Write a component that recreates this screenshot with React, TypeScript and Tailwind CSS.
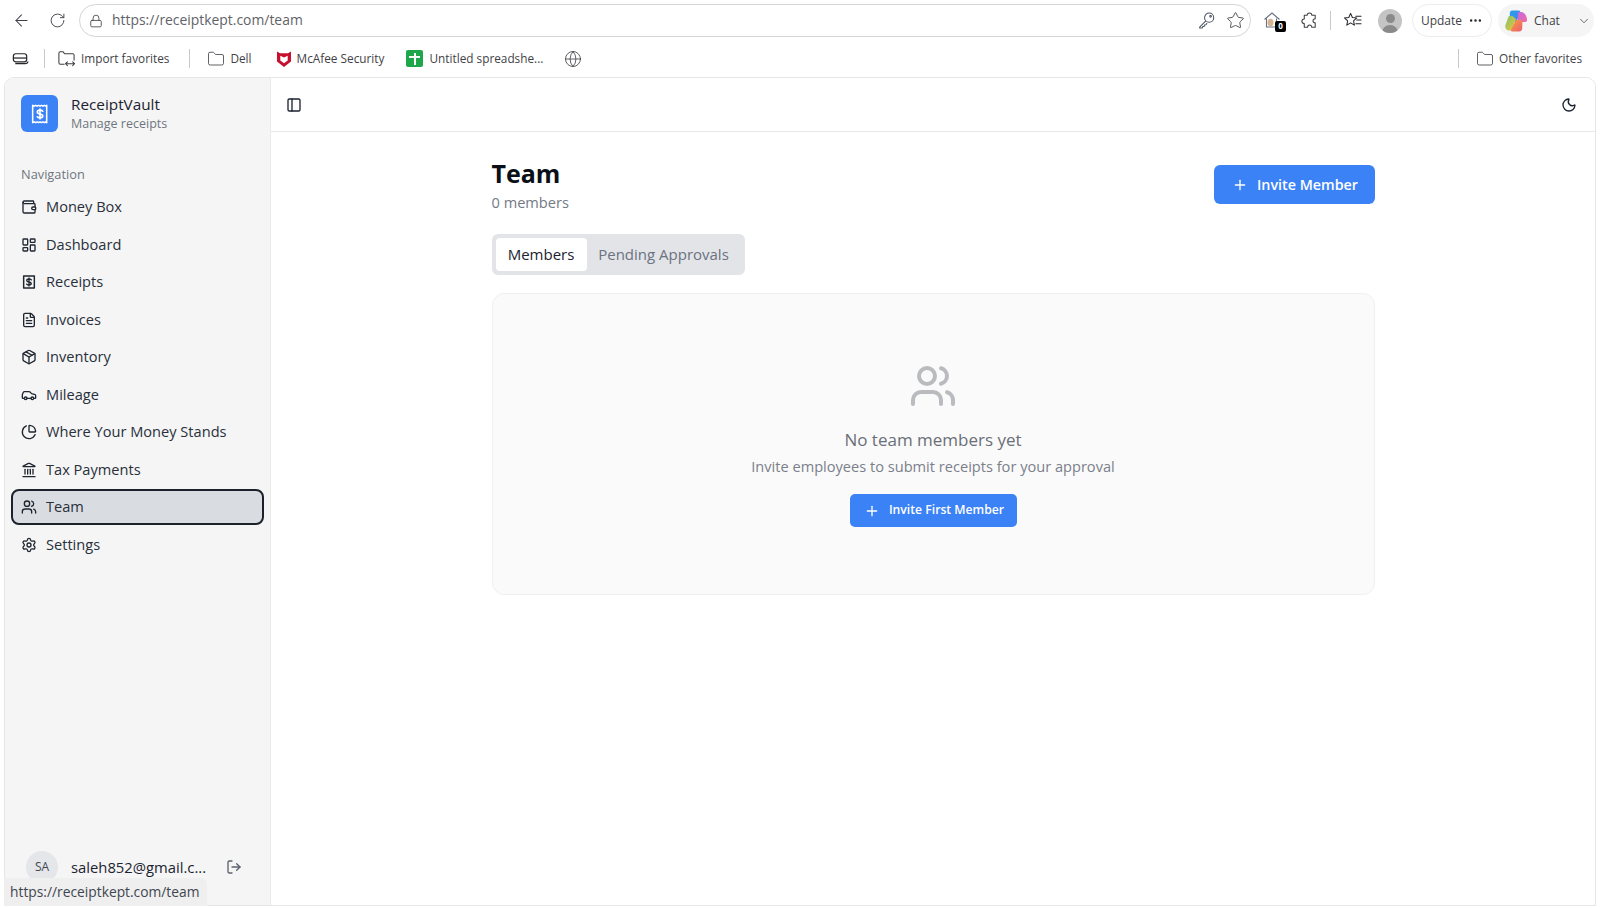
import {
  ArrowLeft,
  Car,
  ChevronDown,
  FileText,
  Folder,
  Globe,
  Landmark,
  LayoutDashboard,
  Lock,
  LogOut,
  Moon,
  MoreHorizontal,
  Package,
  PanelLeft,
  PieChart,
  Plus,
  RotateCw,
  Settings,
  Star,
  Users,
  Wallet,
  type LucideIcon,
} from 'lucide-react';

const font = { fontFamily: '"Open Sans", "Noto Sans", sans-serif' };

function ReceiptDollar({ className }: { className?: string }) {
  return (
    <svg viewBox="0 0 24 24" fill="none" stroke="currentColor" strokeWidth="2.200" strokeLinejoin="round" className={className}>
      <path d="M4 3h16v18H4z" />
      <path d="M12 6v12M15.500 8.800c-.7-.9-1.900-1.300-3.500-1.300-1.800 0-3.400.7-3.400 2.200s1.600 2 3.400 2.300 3.400.9 3.400 2.400-1.600 2.200-3.400 2.200c-1.600 0-2.800-.5-3.500-1.400" strokeWidth="2" strokeLinecap="round" />
    </svg>
  );
}

function LogoReceipt() {
  return (
    <svg viewBox="0 0 24 24" fill="none" className="h-[22px] w-[22px]">
      <path
        d="M4 2.500l1.600 1 1.600-1 1.600 1 1.600-1 1.600 1 1.600-1 1.600 1 1.600-1 1.600 1 .9-1v19l-.9-1-1.600 1-1.600-1-1.600 1-1.600-1-1.600 1-1.600-1-1.600 1-1.600-1L4 21.500z"
        stroke="white"
        strokeWidth="1.700"
        strokeLinejoin="round"
      />
      <path
        d="M12 6.500v11M15 9c-.6-.9-1.600-1.200-3-1.200-1.600 0-3 .6-3 2s1.400 1.900 3 2.200 3 .8 3 2.200-1.400 2-3 2c-1.400 0-2.400-.4-3-1.200"
        stroke="white"
        strokeWidth="1.800"
        strokeLinecap="round"
      />
    </svg>
  );
}

function KeyIcon() {
  return (
    <svg viewBox="0 0 20 20" fill="none" stroke="#4b5563" strokeWidth="1.100" className="h-[19px] w-[19px]">
      <circle cx="12.800" cy="7" r="4.800" />
      <circle cx="14.300" cy="5.600" r="0.900" />
      <path d="M9.300 10.400 2.800 17v.9h2.700l.5-1.500h1.500l.4-1.600 1.500-.4 1.200-1.800" strokeLinejoin="round" />
    </svg>
  );
}

function PuzzleIcon() {
  return (
    <svg viewBox="0 0 20 20" fill="none" stroke="#3f3f46" strokeWidth="1.100" strokeLinejoin="round" className="h-[19px] w-[19px]">
      <path d="M7.500 4.500C7.500 2.800 8.700 2 10 2s2.500.8 2.500 2.500H16v3.600c-1.500 0-2.300 1-2.300 2.200s.8 2.200 2.300 2.200V17h-3.600c0-1.500-1-2.300-2.200-2.300S8 15.500 8 17H4.500v-3.700C2.900 13.300 2 12.100 2 10.900s.9-2.400 2.500-2.400V4.500z" />
    </svg>
  );
}

function FavListIcon() {
  return (
    <svg viewBox="0 0 20 20" fill="none" stroke="#27272a" strokeWidth="1.100" strokeLinejoin="round" className="h-[19px] w-[19px]">
      <path d="M8 2.500l1.900 4.300 4.600.5-3.400 3 .9 4.600L8 12.500l-4 2.400.9-4.600-3.400-3 4.600-.5z" />
      <path d="M13.500 5.500H19M14.500 9.500H19M13.500 13.500H19" strokeLinecap="round" />
    </svg>
  );
}

function HomeBadge() {
  return (
    <div className="relative h-[22px] w-[22px]">
      <svg viewBox="0 0 22 22" fill="none" className="h-[22px] w-[22px]">
        <path d="M2.500 9.500 10 3l7.500 6.500M4.500 8.500V17h10V8.500" stroke="#6b7280" strokeWidth="1.100" />
        <ellipse cx="8.500" cy="12.500" rx="3" ry="3.800" fill="#d6b48f" />
      </svg>
      <span className="absolute bottom-0 right-[-2px] flex h-[11px] w-[11px] items-center justify-center rounded-[2px] bg-black text-[8px] font-bold leading-none text-white">
        0
      </span>
    </div>
  );
}

function Copilot() {
  return (
    <svg viewBox="0 0 24 24" className="h-[24px] w-[24px]">
      <defs>
        <linearGradient id="cp1" x1="0" y1="0" x2="1" y2="1">
          <stop offset="0" stopColor="#2aa3e8" />
          <stop offset="1" stopColor="#3f7ff0" />
        </linearGradient>
        <linearGradient id="cp2" x1="0" y1="0" x2="1" y2="1">
          <stop offset="0" stopColor="#c56be0" />
          <stop offset="1" stopColor="#f06aa8" />
        </linearGradient>
        <linearGradient id="cp3" x1="0" y1="0" x2="1" y2="1">
          <stop offset="0" stopColor="#7cc36b" />
          <stop offset="1" stopColor="#f2c43c" />
        </linearGradient>
        <linearGradient id="cp4" x1="0" y1="0" x2="1" y2="1">
          <stop offset="0" stopColor="#f7a03a" />
          <stop offset="1" stopColor="#ec5b73" />
        </linearGradient>
      </defs>
      <path d="M8 1.500h6.500c1.400 0 2 .9 1.500 2.200L12.500 13H6l-.2-9c0-1.500 1-2.500 2.200-2.500z" fill="url(#cp1)" />
      <path d="M14 3h3c3 0 5.500 3 6 7.500.2 1.500-.8 2.500-2 2.500h-7.500z" fill="url(#cp2)" />
      <path d="M6 7c-1 0-1.500.5-2 2L1.500 16c-.8 2.800 1 5.500 3.500 5.500h3L12 10 8.500 7z" fill="url(#cp3)" />
      <path d="M12 11h6.500l-.3 8.500c0 1.500-1.200 3-3 3H8c-1 0-1.300-.8-1-1.500z" fill="url(#cp4)" />
    </svg>
  );
}

function McAfee() {
  return (
    <svg viewBox="0 0 16 18" className="h-[18px] w-[16px]">
      <path d="M1 1.500 4 3.300h8l3-1.800v10L8 17 1 11.500z" fill="#c8102e" />
      <path d="M4.300 5.800 8 7.500l3.700-1.700v4.700L8 13.200l-3.700-2.700z" fill="white" />
    </svg>
  );
}

function SheetIcon() {
  return (
    <div className="relative mr-[1px] h-[17px] w-[17px] rounded-[2px] bg-[#1ea64a]">
      <span className="absolute left-[3px] right-[3px] top-[6px] h-[2px] bg-white" />
      <span className="absolute bottom-[2px] left-[7.500px] top-[3px] w-[2px] bg-white" />
    </div>
  );
}

function ImportFav() {
  return (
    <svg viewBox="0 0 20 20" fill="none" stroke="#3f3f46" strokeWidth="1.100" strokeLinejoin="round" className="h-[19px] w-[19px]">
      <path d="M8 16H3.500A1.500 1.500 0 0 1 2 14.500v-10A1.500 1.500 0 0 1 3.500 3h3l1.500 2h8.500A1.500 1.500 0 0 1 18 6.500V12" />
      <path d="M9.500 15.500h8.500M11 13.500l-2 2 2 2M16.500 13.500l2 2-2 2" strokeLinecap="round" />
    </svg>
  );
}

function TabsIcon() {
  return (
    <svg viewBox="0 0 20 20" fill="none" stroke="#27272a" strokeWidth="1.300" className="h-[19px] w-[19px]">
      <rect x="2.500" y="5" width="14" height="8.500" rx="2.500" />
      <path d="M3 9.500h13" />
      <path d="M5 15.500h10c1.500 0 2.500-.7 2.800-2" strokeLinecap="round" />
    </svg>
  );
}

function BarDivider({ className }: { className: string }) {
  return <div className={`h-[19px] w-px bg-[#c9c9c9] ${className}`} />;
}

function Bookmark({ icon, label, className }: { icon: React.ReactNode; label: string; className: string }) {
  return (
    <div className={`flex items-center gap-[5px] text-[11.800px] text-[#3f3f46] ${className}`}>
      {icon}
      <span>{label}</span>
    </div>
  );
}

const nav: { label: string; icon: LucideIcon | typeof ReceiptDollar }[] = [
  { label: 'Money Box', icon: Wallet },
  { label: 'Dashboard', icon: LayoutDashboard },
  { label: 'Receipts', icon: ReceiptDollar },
  { label: 'Invoices', icon: FileText },
  { label: 'Inventory', icon: Package },
  { label: 'Mileage', icon: Car },
  { label: 'Where Your Money Stands', icon: PieChart },
  { label: 'Tax Payments', icon: Landmark },
  { label: 'Team', icon: Users },
  { label: 'Settings', icon: Settings },
];

function Sidebar() {
  return (
    <aside className="flex w-[266px] shrink-0 flex-col border-r border-[#ebebeb] bg-[#f5f5f5]">
      <div className="flex items-center gap-[13px] px-[16px] pt-[16px]">
        <div className="flex h-[37px] w-[37px] items-center justify-center rounded-[6px] bg-[#3b82f6]">
          <LogoReceipt />
        </div>
        <div>
          <div className="text-[15.300px] font-medium leading-[20px] text-[#1b2330]">ReceiptVault</div>
          <div className="text-[12.500px] leading-[19px] text-[#6f7580]">Manage receipts</div>
        </div>
      </div>
      <div className="px-[16px] pb-[6px] pt-[32px] text-[12.800px] leading-[18px] text-[#6f7580]">Navigation</div>
      <nav className="flex flex-col gap-[1.500px] px-[6px]">
        {nav.map(({ label, icon: Icon }) => {
          const active = label === 'Team';
          return (
            <div
              key={label}
              className={`flex h-[36px] items-center gap-[9px] rounded-[8px] border-2 pl-[8px] text-[14.600px] text-[#29303b] ${
                active ? 'border-[#1c222b] bg-[#d9dce1]' : 'border-transparent'
              }`}
            >
              <Icon className="h-[16px] w-[16px] text-[#1f2630]" strokeWidth={2} />
              <span>{label}</span>
            </div>
          );
        })}
      </nav>
      <div className="mt-auto flex items-center pb-[22px] pl-[21px]">
        <div className="flex h-[32px] w-[32px] items-center justify-center rounded-full bg-[#e4e6ea] text-[12px] text-[#3f4650]">
          SA
        </div>
        <span className="ml-[13px] text-[14.800px] text-[#1b2330]">saleh852@gmail.c...</span>
        <LogOut className="ml-[20px] h-[16px] w-[16px] text-[#5b626d]" />
      </div>
    </aside>
  );
}

function Main() {
  return (
    <main className="flex min-w-0 flex-1 flex-col bg-white">
      <header className="flex h-[54px] shrink-0 items-center justify-between border-b border-[#e8e8e8] pl-[15px] pr-[18px]">
        <PanelLeft className="h-[16px] w-[16px] text-[#1b2330]" />
        <Moon className="h-[16px] w-[16px] text-[#1b2330]" />
      </header>
      <div className="mx-auto w-[883px] pt-[26px]">
        <div className="flex items-start justify-between">
          <div>
            <h1 className="text-[25px] font-bold leading-[30px] text-[#0b0f17]">Team</h1>
            <p className="mt-[3px] text-[14.600px] leading-[22px] text-[#737a85]">0 members</p>
          </div>
          <button className="mt-[7px] flex h-[39px] w-[161px] items-center justify-center gap-[9px] rounded-[6px] bg-[#3b82f6] pl-[2px] text-[14.300px] font-semibold text-white">
            <Plus className="h-[16px] w-[16px]" />
            Invite Member
          </button>
        </div>
        <div className="mt-[21px] flex h-[41px] w-[253px] items-center rounded-[6px] bg-[#e2e4e8] p-[4px] text-[15px]">
          <div className="flex h-[33px] w-[91px] items-center justify-center rounded-[4px] bg-white font-medium text-[#1b2330]">
            Members
          </div>
          <div className="flex flex-1 items-center justify-center text-[#6b7280]">Pending Approvals</div>
        </div>
        <section className="mt-[18px] flex h-[302px] flex-col items-center rounded-[12px] border border-[#f0f0f0] bg-[#fafafa] pt-[68px]">
          <Users className="h-[48px] w-[48px] text-[#b9bbbf]" strokeWidth={2} />
          <h2 className="mt-[17px] text-[17px] font-medium leading-[26px] text-[#6a6f78]">No team members yet</h2>
          <p className="mt-[1px] text-[14.600px] leading-[24px] text-[#7a808a]">Invite employees to submit receipts for your approval</p>
          <button className="mt-[16px] flex h-[33px] w-[167px] items-center justify-center gap-[9px] rounded-[5px] bg-[#3b82f6] pl-[2px] text-[12.200px] font-semibold text-white">
            <Plus className="h-[16px] w-[16px]" />
            Invite First Member
          </button>
        </section>
      </div>
    </main>
  );
}

export default function App() {
  return (
    <div className="relative flex h-[908px] w-[1600px] flex-col overflow-hidden bg-white" style={font}>
      {/* browser toolbar */}
      <div className="flex h-[41px] shrink-0 items-center">
        <ArrowLeft className="ml-[12px] h-[19px] w-[19px] text-[#3f3f46]" strokeWidth={1.300} />
        <RotateCw className="ml-[18px] h-[17px] w-[17px] text-[#3f3f46]" strokeWidth={1.300} />
        <div className="ml-[13px] flex h-[33px] w-[1172px] items-center rounded-full border border-[#d4d4d4] pl-[9px] pr-[5px]">
          <Lock className="h-[14px] w-[14px] text-[#3f3f46]" strokeWidth={1.400} />
          <span className="ml-[9px] text-[13.900px] text-[#5f6368]">https://receiptkept.com/team</span>
          <div className="ml-auto flex items-center gap-[10px]">
            <KeyIcon />
            <Star className="h-[19px] w-[19px] text-[#3f3f46]" strokeWidth={1.100} />
          </div>
        </div>
        <div className="ml-[11px]">
          <HomeBadge />
        </div>
        <div className="ml-[16px]">
          <PuzzleIcon />
        </div>
        <BarDivider className="ml-[11px]" />
        <div className="ml-[12px]">
          <FavListIcon />
        </div>
        <div className="ml-[16px] flex h-[24px] w-[24px] items-end justify-center overflow-hidden rounded-full bg-[#c4c4c4]">
          <div className="relative h-[19px] w-[16px]">
            <span className="absolute left-[3.500px] top-0 h-[9px] w-[9px] rounded-full bg-[#8a8a8a]" />
            <span className="absolute bottom-0 left-0 h-[8px] w-[16px] rounded-t-full bg-[#8a8a8a]" />
          </div>
        </div>
        <div className="ml-[10px] flex h-[33px] w-[80px] items-center justify-center gap-[6px] rounded-full border border-[#ececec] text-[12px] text-[#3f3f46]">
          Update
          <MoreHorizontal className="h-[15px] w-[15px] text-[#27272a]" />
        </div>
        <div className="ml-[6px] flex h-[33px] w-[96px] items-center rounded-full bg-[#f5f5f5] pl-[6px] text-[12px] text-[#3f3f46]">
          <Copilot />
          <span className="ml-[6px]">Chat</span>
          <ChevronDown className="ml-[17px] h-[14px] w-[14px]" strokeWidth={1.300} />
        </div>
      </div>

      {/* favorites bar */}
      <div className="flex h-[36px] shrink-0 items-center pb-[1px]">
        <div className="ml-[11px]">
          <TabsIcon />
        </div>
        <BarDivider className="ml-[14px]" />
        <Bookmark className="ml-[12px]" icon={<ImportFav />} label="Import favorites" />
        <BarDivider className="ml-[20px]" />
        <Bookmark className="ml-[17px]" icon={<Folder className="h-[18px] w-[18px]" strokeWidth={1.100} />} label="Dell" />
        <Bookmark className="ml-[24px]" icon={<McAfee />} label="McAfee Security" />
        <Bookmark className="ml-[22px]" icon={<SheetIcon />} label="Untitled spreadshe..." />
        <Globe className="ml-[21px] h-[18px] w-[18px] text-[#3f3f46]" strokeWidth={1.100} />
        <BarDivider className="ml-auto" />
        <Bookmark className="ml-[17px] mr-[18px]" icon={<Folder className="h-[18px] w-[18px]" strokeWidth={1.100} />} label="Other favorites" />
      </div>

      {/* page */}
      <div className="mx-[4px] mb-[2px] flex min-h-0 flex-1 overflow-hidden rounded-t-[10px] border border-[#e6e6e6]">
        <Sidebar />
        <Main />
      </div>

      {/* link status bubble */}
      <div className="absolute bottom-[2px] left-[4px] flex h-[28px] w-[203px] items-center rounded-tr-[6px] bg-[#efefef] pl-[6px] text-[13.800px] text-[#3f4650]">
        https://receiptkept.com/team
      </div>
    </div>
  );
}
